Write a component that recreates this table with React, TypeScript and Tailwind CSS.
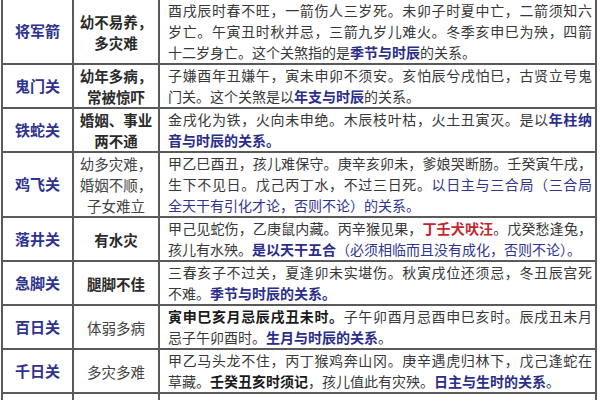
import React from "react"

type Seg = { t: string; c?: "blue" | "blueBold" | "red" | "bold" }

interface Row {
  name: string
  effect: string[]
  effectBold: boolean
  lines: Seg[][]
  h: string
}

const rows: Row[] = [
  {
    name: "将军箭",
    effect: ["幼不易养，", "多灾难"],
    effectBold: true,
    h: "h-[65px]",
    lines: [
      [{ t: "酉戌辰时春不旺，一箭伤人三岁死。未卯子时夏中亡，二箭须知六" }],
      [{ t: "岁亡。午寅丑时秋并忌，三箭九岁儿难火。冬季亥申巳为殃，四箭" }],
      [{ t: "十二岁身亡。这个关煞指的是" }, { t: "季节与时辰", c: "blueBold" }, { t: "的关系。" }],
    ],
  },
  {
    name: "鬼门关",
    effect: ["幼年多病，", "常被惊吓"],
    effectBold: true,
    h: "h-[43px]",
    lines: [
      [{ t: "子嫌酉年丑嫌午，寅未申卯不须安。亥怕辰兮戌怕巳，古贤立号鬼" }],
      [{ t: "门关。这个关煞是以" }, { t: "年支与时辰", c: "blueBold" }, { t: "的关系。" }],
    ],
  },
  {
    name: "铁蛇关",
    effect: ["婚姻、事业", "两不通"],
    effectBold: true,
    h: "h-[44px]",
    lines: [
      [{ t: "金戌化为铁，火向未申绝。木辰枝叶枯，火土丑寅灭。是以" }, { t: "年柱纳", c: "blueBold" }],
      [{ t: "音与时辰的关系。", c: "blueBold" }],
    ],
  },
  {
    name: "鸡飞关",
    effect: ["幼多灾难，", "婚姻不顺，", "子女难立"],
    effectBold: false,
    h: "h-[64px]",
    lines: [
      [{ t: "甲乙巳酉丑，孩儿难保守。庚辛亥卯未，爹娘哭断肠。壬癸寅午戌，" }],
      [{ t: "生下不见日。戊己丙丁水，不过三日死。" }, { t: "以日主与三合局（三合局", c: "blue" }],
      [{ t: "全天干有引化才论，否则不论）的关系。", c: "blue" }],
    ],
  },
  {
    name: "落井关",
    effect: ["有水灾"],
    effectBold: true,
    h: "h-[44px]",
    lines: [
      [
        { t: "甲己见蛇伤，乙庚鼠内藏。丙辛猴见果，" },
        { t: "丁壬犬吠汪", c: "red" },
        { t: "。戊癸愁逢兔，" },
      ],
      [
        { t: "孩儿有水殃。" },
        { t: "是以天干五合", c: "blueBold" },
        { t: "（必须相临而且没有成化，否则不论）。", c: "blue" },
      ],
    ],
  },
  {
    name: "急脚关",
    effect: ["腿脚不佳"],
    effectBold: true,
    h: "h-[43px]",
    lines: [
      [{ t: "三春亥子不过关，夏逢卯未实堪伤。秋寅戌位还须忌，冬丑辰宫死" }],
      [{ t: "不难。" }, { t: "季节与时辰的关系。", c: "blueBold" }],
    ],
  },
  {
    name: "百日关",
    effect: ["体弱多病"],
    effectBold: false,
    h: "h-[44px]",
    lines: [
      [{ t: "寅申巳亥月忌辰戌丑未时。", c: "bold" }, { t: "子午卯酉月忌酉申巳亥时。辰戌丑未月" }],
      [{ t: "忌子午卯酉时。" }, { t: "生月与时辰的关系", c: "blueBold" }, { t: "。" }],
    ],
  },
  {
    name: "千日关",
    effect: ["多灾多难"],
    effectBold: false,
    h: "h-[44px]",
    lines: [
      [{ t: "甲乙马头龙不住，丙丁猴鸡奔山冈。庚辛遇虎归林下，戊己逢蛇在" }],
      [
        { t: "草藏。" },
        { t: "壬癸丑亥时须记", c: "bold" },
        { t: "，孩儿值此有灾殃。" },
        { t: "日主与生时的关系", c: "blueBold" },
        { t: "。" },
      ],
    ],
  },
]

function segClass(c?: Seg["c"]) {
  if (c === "blueBold") return "font-bold text-[#2a2d8a]"
  if (c === "blue") return "text-[#2f3490]"
  if (c === "red") return "font-bold text-[#c4262e]"
  if (c === "bold") return "font-bold text-[#1a1a1a]"
  return ""
}

function lineLength(line: Seg[]) {
  return line.reduce((n, s) => n + s.t.length, 0)
}

export default function App() {
  return (
    <div
      className="w-[600px] h-[400px] overflow-hidden bg-white"
      style={{ fontFamily: '"Noto Sans CJK SC", "Noto Sans", sans-serif' }}
    >
      <table className="-mt-[2px] ml-[1px] w-[596px] border-collapse table-fixed">
        <colgroup>
          <col className="w-[71px]" />
          <col className="w-[86px]" />
          <col />
        </colgroup>
        <tbody>
          {rows.map((row, i) => (
            <tr key={i}>
              <td
                className={`${row.h} border-2 border-[#5a5a5a] text-center text-[15px] font-bold text-[#2e3290] p-0`}
              >
                {row.name}
              </td>
              <td
                className={`border-2 border-[#5a5a5a] text-center text-[14.5px] leading-[21px] p-0 ${
                  row.effectBold ? "font-bold text-[#2a2a2a]" : "font-normal text-[#444]"
                }`}
              >
                {row.effect.map((e, j) => (
                  <div key={j}>{e}</div>
                ))}
              </td>
              <td className="border-2 border-[#5a5a5a] pl-[8px] pr-0 py-0 text-left text-[14px] leading-[21px] text-[#383838] whitespace-nowrap">
                {row.lines.map((line, j) => {
                  const last = j === row.lines.length - 1
                  const tight = lineLength(line) > 30
                  return (
                    <div
                      key={j}
                      className={`w-[424px] ${tight ? "tracking-[-0.6px]" : ""} ${
                        last ? "" : "text-justify [text-align-last:justify]"
                      }`}
                    >
                      {line.map((s, k) => (
                        <span key={k} className={segClass(s.c)}>
                          {s.t}
                        </span>
                      ))}
                    </div>
                  )
                })}
              </td>
            </tr>
          ))}
          <tr>
            <td className="h-[8px] border-2 border-[#5a5a5a] p-0" />
            <td className="border-2 border-[#5a5a5a] p-0" />
            <td className="border-2 border-[#5a5a5a] p-0" />
          </tr>
        </tbody>
      </table>
    </div>
  )
}
